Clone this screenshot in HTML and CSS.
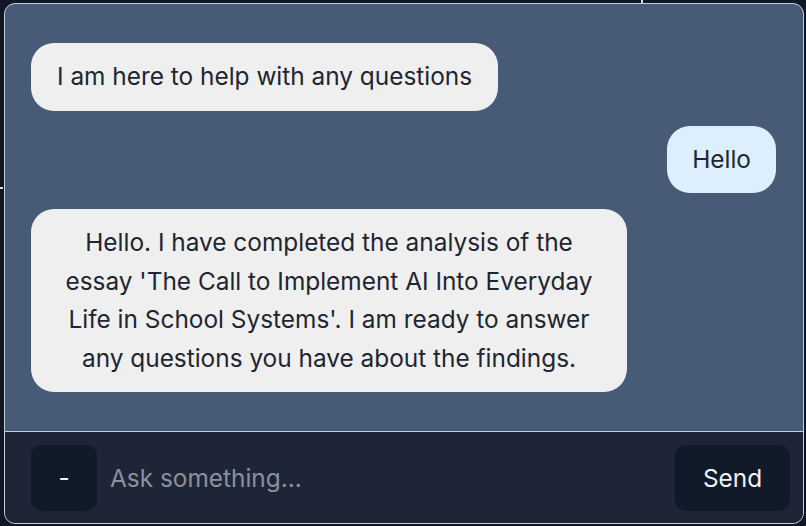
FILE: index.html
```html
<!DOCTYPE html>
<html lang="en">
<head>
<meta charset="utf-8">
<title>Chat</title>
<link rel="stylesheet" href="styles.css">
</head>
<body>
<span class="tick tick-top"></span>
<span class="tick tick-left"></span>
<div class="panel">
  <div class="messages">
    <div class="bubble bot">I am here to help with any questions</div>
    <div class="bubble user">Hello</div>
    <div class="bubble bot wide">Hello. I have completed the analysis of the essay 'The Call to Implement AI Into Everyday Life in School Systems'. I am ready to answer any questions you have about the findings.</div>
  </div>
  <div class="composer">
    <button class="btn minus">-</button>
    <input class="input" type="text" placeholder="Ask something...">
    <button class="btn send">Send</button>
  </div>
</div>
</body>
</html>
```
FILE: styles.css
```css
html, body {
  margin: 0;
  padding: 0;
  background: #0f1626;
  width: 806px;
  height: 526px;
  overflow: hidden;
  font-family: Inter, "Noto Sans", sans-serif;
}
.tick {
  position: absolute;
  background: #d8dce2;
}
.tick-top { left: 641px; top: 0; width: 2px; height: 3px; }
.tick-left { left: 0; top: 187px; width: 3px; height: 2px; }
.panel {
  box-sizing: border-box;
  margin: 3px 2px 0 4px;
  width: 800px;
  height: 521px;
  border: 1px solid #c9ced6;
  border-radius: 11px;
  background: #475a76;
  display: flex;
  flex-direction: column;
  overflow: hidden;
}
.messages {
  flex: 1;
  padding: 39px 27px 0 26px;
  display: flex;
  flex-direction: column;
  align-items: flex-start;
  gap: 15px;
}
.bubble {
  font-size: 24.4px;
  line-height: 38.5px;
  color: #1e2533;
  padding: 14px 26px 15px;
  border-radius: 23px;
  text-align: center;
}
.bot { background: #efefef; }
.user {
  background: #ddeefc;
  align-self: flex-end;
  padding-left: 25px;
  padding-right: 25px;
}
.wide {
  width: 544px;
  margin-top: 1px;
}
.composer {
  height: 92px;
  border-top: 1px solid #c9ced6;
  background: #1e2536;
  box-sizing: border-box;
  padding: 13px 13px 12px 26px;
  display: flex;
  align-items: stretch;
}
.btn {
  border: none;
  background: #111a28;
  color: #f1f3f6;
  font-family: Inter, "Noto Sans", sans-serif;
  font-size: 24.4px;
  border-radius: 11px;
  padding: 0;
}
.minus { width: 66px; }
.send { width: 115px; }
.input {
  flex: 1;
  border: none;
  background: transparent;
  outline: none;
  font-family: Inter, "Noto Sans", sans-serif;
  font-size: 24.4px;
  color: #e5e7eb;
  padding: 0 13px;
}
.input::placeholder { color: #8a919d; }
```
